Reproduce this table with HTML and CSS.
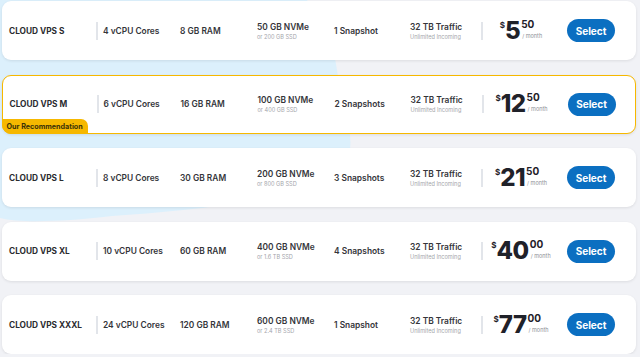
FILE: index.html
```html
<!DOCTYPE html>
<html lang="en">
<head>
    <meta charset="UTF-8">
    <meta name="viewport" content="width=device-width, initial-scale=1.0">
    <title>Cloud VPS Plans</title>
    <link rel="stylesheet" href="styles.css">
</head>
<body>
    <div class="plans">
        <!-- Background blob -->
        <svg class="blob" width="400" height="240" viewBox="0 0 400 240">
            <path d="M0,-20 L280,-20 C320,0 333,40 337,70 C342,105 356,135 348,158 C330,198 200,210 112,216 C60,222 20,223 0,218 Z" fill="#dcf0fc"/>
        </svg>

        <div class="plan">
            <div class="name">CLOUD VPS S</div>
            <div class="sep"></div>
            <div class="spec">4 vCPU Cores</div>
            <div class="spec">8 GB RAM</div>
            <div class="spec">50 GB NVMe<small>or 200 GB SSD</small></div>
            <div class="spec snap">1 Snapshot</div>
            <div class="spec traffic">32 TB Traffic<small>Unlimited Incoming</small></div>
            <div class="sep"></div>
            <div class="price"><span class="cur">$</span><span class="amount">5</span><span class="cents-col"><span class="cents">50</span><span class="per">/ month</span></span></div>
            <button class="select">Select</button>
        </div>

        <div class="plan featured">
            <div class="name">CLOUD VPS M</div>
            <div class="sep"></div>
            <div class="spec">6 vCPU Cores</div>
            <div class="spec">16 GB RAM</div>
            <div class="spec">100 GB NVMe<small>or 400 GB SSD</small></div>
            <div class="spec snap">2 Snapshots</div>
            <div class="spec traffic">32 TB Traffic<small>Unlimited Incoming</small></div>
            <div class="sep"></div>
            <div class="price"><span class="cur">$</span><span class="amount">12</span><span class="cents-col"><span class="cents">50</span><span class="per">/ month</span></span></div>
            <button class="select">Select</button>
            <div class="badge">Our Recommendation</div>
        </div>

        <div class="plan">
            <div class="name">CLOUD VPS L</div>
            <div class="sep"></div>
            <div class="spec">8 vCPU Cores</div>
            <div class="spec">30 GB RAM</div>
            <div class="spec">200 GB NVMe<small>or 800 GB SSD</small></div>
            <div class="spec snap">3 Snapshots</div>
            <div class="spec traffic">32 TB Traffic<small>Unlimited Incoming</small></div>
            <div class="sep"></div>
            <div class="price"><span class="cur">$</span><span class="amount">21</span><span class="cents-col"><span class="cents">50</span><span class="per">/ month</span></span></div>
            <button class="select">Select</button>
        </div>

        <div class="plan">
            <div class="name">CLOUD VPS XL</div>
            <div class="sep"></div>
            <div class="spec">10 vCPU Cores</div>
            <div class="spec">60 GB RAM</div>
            <div class="spec">400 GB NVMe<small>or 1.6 TB SSD</small></div>
            <div class="spec snap">4 Snapshots</div>
            <div class="spec traffic">32 TB Traffic<small>Unlimited Incoming</small></div>
            <div class="sep"></div>
            <div class="price"><span class="cur">$</span><span class="amount">40</span><span class="cents-col"><span class="cents">00</span><span class="per">/ month</span></span></div>
            <button class="select">Select</button>
        </div>

        <div class="plan">
            <div class="name">CLOUD VPS XXXL</div>
            <div class="sep"></div>
            <div class="spec">24 vCPU Cores</div>
            <div class="spec">120 GB RAM</div>
            <div class="spec">600 GB NVMe<small>or 2.4 TB SSD</small></div>
            <div class="spec snap">1 Snapshot</div>
            <div class="spec traffic">32 TB Traffic<small>Unlimited Incoming</small></div>
            <div class="sep"></div>
            <div class="price"><span class="cur">$</span><span class="amount">77</span><span class="cents-col"><span class="cents">00</span><span class="per">/ month</span></span></div>
            <button class="select">Select</button>
        </div>
    </div>
</body>
</html>
```

FILE: styles.css
```css
body {
    margin: 0;
    background: #f1f2f6;
    font-family: 'Inter', 'Liberation Sans', sans-serif;
    color: #2e2f33;
    overflow: hidden;
}
.plans {
    position: relative;
    padding: 1px 4px 0 2px;
    display: flex;
    flex-direction: column;
    gap: 14.5px;
}
.blob {
    position: absolute;
    left: 0;
    top: 0;
    z-index: 0;
}
.plan {
    position: relative;
    z-index: 1;
    height: 59px;
    box-sizing: border-box;
    background: #fff;
    border-radius: 9px;
    box-shadow: 0 1px 3px rgba(0, 0, 0, 0.09);
    display: flex;
    align-items: center;
    padding-left: 7px;
}
.plan.featured {
    border: 1.5px solid #f6b800;
    padding-left: 6.5px;
}
.name {
    width: 87px;
    font-size: 8.3px;
    font-weight: 700;
    color: #2a2b2f;
}
.sep {
    width: 2px;
    height: 18px;
    background: #e2e5ea;
    margin-right: 5px;
}
.spec {
    width: 77px;
    font-size: 8.4px;
    font-weight: 600;
    color: #34353a;
}
.spec.snap {
    width: 76px;
}
.spec.traffic {
    width: 71px;
}
.spec small {
    display: block;
    font-size: 5.6px;
    font-weight: 400;
    color: #a3a5aa;
    margin-top: 2px;
}
.price {
    width: 76px;
    margin-left: -5px;
    display: flex;
    justify-content: center;
    align-items: flex-start;
    color: #1f2129;
}
.cur {
    font-size: 8px;
    font-weight: 700;
    margin-top: 1px;
}
.amount {
    font-size: 24px;
    font-weight: 800;
    line-height: 1;
    letter-spacing: -0.5px;
}
.cents-col {
    display: flex;
    flex-direction: column;
    margin-left: 1px;
}
.cents {
    font-size: 10px;
    font-weight: 700;
    line-height: 1;
}
.per {
    font-size: 5.5px;
    color: #8d8f95;
    margin-top: 4px;
    margin-left: 1px;
}
.select {
    margin-left: 8px;
    width: 48px;
    height: 23px;
    border: none;
    border-radius: 12px;
    background: #0b6fc1;
    color: #fff;
    font-family: inherit;
    font-size: 10px;
    font-weight: 700;
    padding: 0;
    cursor: pointer;
}
.badge {
    position: absolute;
    left: -1.5px;
    bottom: -1.5px;
    background: #f6b800;
    color: #3b3208;
    font-size: 7.2px;
    font-weight: 700;
    padding: 3px 5px 3px 5px;
    border-radius: 0 7px 0 9px;
}
```
